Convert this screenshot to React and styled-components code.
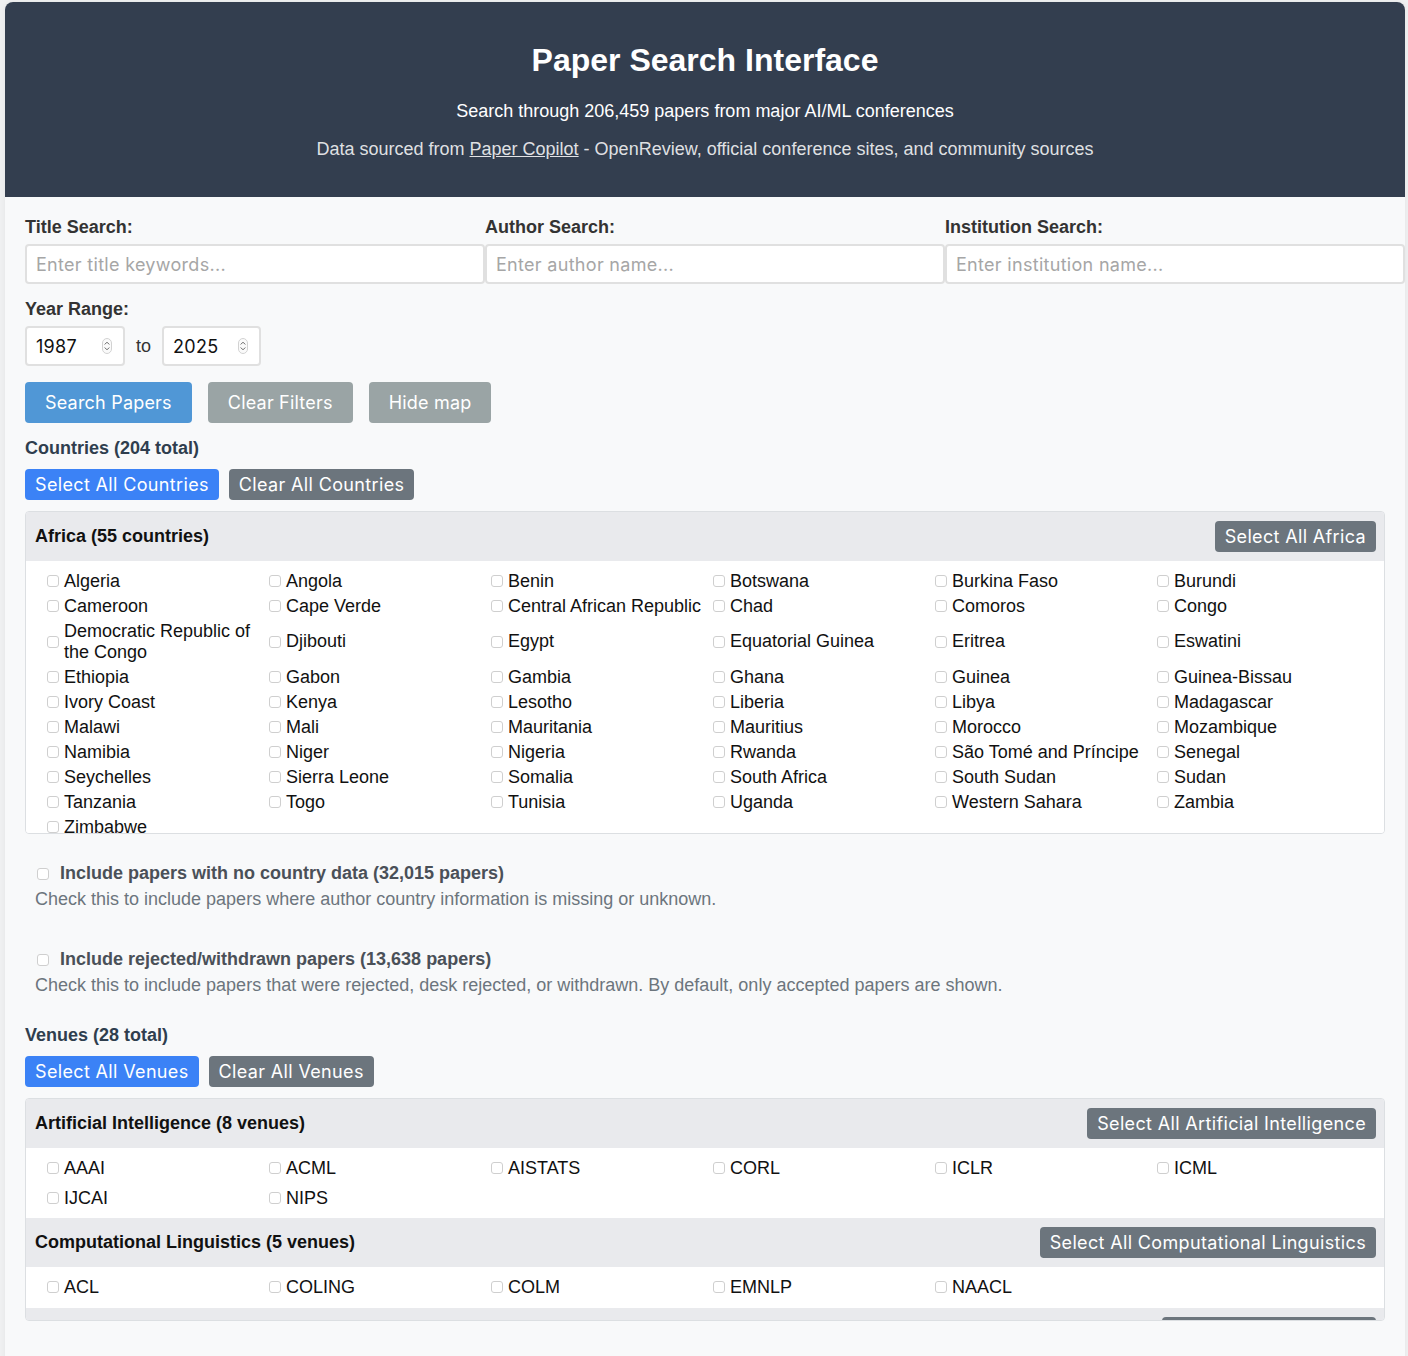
import React from "react";
import styled, { createGlobalStyle } from "styled-components";

const GlobalStyle = createGlobalStyle`
  html, body { margin: 0; padding: 0; background: #f0f1f2; }
  body { font-family: "Liberation Sans", Arial, sans-serif; color: #333; }
  * { box-sizing: border-box; }
`;

const Container = styled.div`
  width: 1400px;
  margin: 2px 0 0 5px;
  background: #f8f9fa;
  border-radius: 8px 8px 0 0;
  overflow: hidden;
  box-shadow: 0 0 6px rgba(0, 0, 0, 0.06);
`;

const Header = styled.header`
  background: #333e4f;
  color: #fff;
  text-align: center;
  padding: 40px 20px 37px;
`;

const Title = styled.h1`
  margin: 0 0 22px;
  font-size: 32px;
  font-weight: 700;
  line-height: 37px;
`;

const Subtitle = styled.p`
  margin: 0 0 17px;
  font-size: 18px;
  line-height: 21px;
  color: ${(p) => (p.$muted ? "rgba(255,255,255,0.86)" : "#fff")};
  &:last-child { margin-bottom: 0; }
`;

const Link = styled.a`
  color: inherit;
  text-decoration: underline;
`;

const Content = styled.main`
  padding: 20px 20px 40px;
`;

const SearchGrid = styled.div`
  display: grid;
  grid-template-columns: repeat(3, 440px);
  column-gap: 20px;
  margin-bottom: 15px;
`;

const Field = styled.div`
  display: flex;
  flex-direction: column;
  gap: 6px;
`;

const Label = styled.label`
  font-size: 18px;
  font-weight: 700;
  line-height: 21px;
  color: #333;
`;

const TextInput = styled.input`
  width: 460px;
  height: 40px;
  padding: 0 9px;
  border: 2px solid #e0e0e0;
  border-radius: 4px;
  background: #fff;
  font-family: Inter, "Noto Sans", sans-serif;
  font-size: 18px;
  letter-spacing: 0.3px;
  color: #333;
  outline: none;
  &::placeholder { color: #a6a6a6; }
`;

const YearRow = styled.div`
  display: flex;
  align-items: center;
  gap: 11px;
`;

const YearBox = styled.div`
  width: ${(p) => p.$w}px;
  height: 40px;
  display: flex;
  align-items: center;
  padding: 0 11px 0 9px;
  border: 2px solid #e0e0e0;
  border-radius: 4px;
  background: #fff;
`;

const YearInput = styled.input`
  flex: 1;
  min-width: 0;
  border: none;
  outline: none;
  background: transparent;
  padding: 0;
  font-family: Inter, "Noto Sans", sans-serif;
  font-size: 18px;
  letter-spacing: 0.3px;
  color: #111;
`;

const ToText = styled.span`
  font-size: 18px;
  color: #333;
`;

const ActionRow = styled.div`
  display: flex;
  gap: ${(p) => p.$gap || 16}px;
  margin: ${(p) => p.$margin || "16px 0 15px"};
`;

const Button = styled.button`
  height: ${(p) => p.$h || 41}px;
  padding: 0 ${(p) => p.$px || 20}px;
  border: none;
  border-radius: 4px;
  background: ${(p) => p.$bg};
  color: #fff;
  font-family: Inter, "Noto Sans", sans-serif;
  font-size: 18px;
  letter-spacing: ${(p) => (p.$h ? 0.35 : 0.2)}px;
  cursor: pointer;
  white-space: nowrap;
`;

const SectionTitle = styled.h3`
  margin: 0 0 10px;
  font-size: 18px;
  line-height: 21px;
  font-weight: 700;
  color: #2f3e4e;
`;

const GroupBox = styled.div`
  border: 1px solid #dcdfe2;
  border-radius: 4px;
  background: #fff;
  max-height: ${(p) => p.$max}px;
  overflow-y: auto;
  scrollbar-width: none;
  &::-webkit-scrollbar { display: none; }
`;

const GroupHeader = styled.div`
  display: flex;
  align-items: center;
  justify-content: space-between;
  padding: 9px 8px 9px 9px;
  min-height: 49px;
  background: #e9eaed;
`;

const GroupTitle = styled.span`
  font-size: 18px;
  font-weight: 700;
  color: #111;
`;

const ItemGrid = styled.div`
  display: grid;
  grid-template-columns: repeat(6, 222px);
  row-gap: ${(p) => p.$gap}px;
  padding: 10px 20px 10px 21px;
`;

const Item = styled.label`
  display: flex;
  align-items: center;
  font-size: 18px;
  line-height: 20.5px;
  color: #111;
`;

const Check = styled.input.attrs({ type: "checkbox" })`
  appearance: none;
  -webkit-appearance: none;
  flex: none;
  width: 12px;
  height: 12px;
  margin: 0 5px 0 0;
  border: 1px solid #cfcfcf;
  border-radius: 3px;
  background: #fff;
`;

const OptionBlock = styled.div`
  padding: 10px;
  margin: 19px 0;
`;

const OptionLabel = styled.label`
  display: flex;
  align-items: center;
  font-size: 18px;
  line-height: 21px;
  font-weight: 700;
  color: #4a5058;
`;

const OptionCheck = styled(Check)`
  margin: 0 11px 0 2px;
`;

const OptionDesc = styled.div`
  margin-top: 5px;
  font-size: 18px;
  line-height: 21px;
  color: #6c757d;
`;

const Spinner = () => (
  <svg width="10" height="16" viewBox="0 0 10 16" fill="none">
    <rect x="0.5" y="0.5" width="9" height="15" rx="4.5" stroke="#d2d2d2" fill="#fafafa" />
    <path d="M3 6.2 L5 4.2 L7 6.2" stroke="#666" strokeWidth="1" strokeLinecap="round" strokeLinejoin="round" />
    <path d="M3 9.8 L5 11.8 L7 9.8" stroke="#666" strokeWidth="1" strokeLinecap="round" strokeLinejoin="round" />
  </svg>
);

const africa = [
  "Algeria", "Angola", "Benin", "Botswana", "Burkina Faso", "Burundi",
  "Cameroon", "Cape Verde", "Central African Republic", "Chad", "Comoros", "Congo",
  "Democratic Republic of the Congo", "Djibouti", "Egypt", "Equatorial Guinea", "Eritrea", "Eswatini",
  "Ethiopia", "Gabon", "Gambia", "Ghana", "Guinea", "Guinea-Bissau",
  "Ivory Coast", "Kenya", "Lesotho", "Liberia", "Libya", "Madagascar",
  "Malawi", "Mali", "Mauritania", "Mauritius", "Morocco", "Mozambique",
  "Namibia", "Niger", "Nigeria", "Rwanda", "São Tomé and Príncipe", "Senegal",
  "Seychelles", "Sierra Leone", "Somalia", "South Africa", "South Sudan", "Sudan",
  "Tanzania", "Togo", "Tunisia", "Uganda", "Western Sahara", "Zambia",
  "Zimbabwe",
];

const asia = ["Afghanistan", "Bangladesh", "Bhutan", "Cambodia", "China", "India", "Indonesia", "Japan"];

const venueGroups = [
  { name: "Artificial Intelligence", items: ["AAAI", "ACML", "AISTATS", "CORL", "ICLR", "ICML", "IJCAI", "NIPS"] },
  { name: "Computational Linguistics", items: ["ACL", "COLING", "COLM", "EMNLP", "NAACL"] },
  { name: "Data Mining", items: ["KDD", "WWW", "ICDM"] },
  { name: "Computer Vision", items: ["CVPR", "ECCV", "ICCV", "WACV"] },
];

const Group = ({ title, button, items, gap }) => (
  <>
    <GroupHeader>
      <GroupTitle>{title}</GroupTitle>
      <Button $bg="#6c757d" $h={31} $px={10}>{button}</Button>
    </GroupHeader>
    <ItemGrid $gap={gap}>
      {items.map((c) => (
        <Item key={c}>
          <Check />
          <span>{c}</span>
        </Item>
      ))}
    </ItemGrid>
  </>
);

export default function App() {
  return (
    <>
      <GlobalStyle />
      <Container>
        <Header>
          <Title>Paper Search Interface</Title>
          <Subtitle>Search through 206,459 papers from major AI/ML conferences</Subtitle>
          <Subtitle $muted>
            Data sourced from <Link href="#">Paper Copilot</Link> - OpenReview, official conference sites, and community sources
          </Subtitle>
        </Header>
        <Content>
          <SearchGrid>
            <Field>
              <Label>Title Search:</Label>
              <TextInput placeholder="Enter title keywords..." />
            </Field>
            <Field>
              <Label>Author Search:</Label>
              <TextInput placeholder="Enter author name..." />
            </Field>
            <Field>
              <Label>Institution Search:</Label>
              <TextInput placeholder="Enter institution name..." />
            </Field>
          </SearchGrid>
          <Field>
            <Label>Year Range:</Label>
            <YearRow>
              <YearBox $w={100}>
                <YearInput defaultValue="1987" />
                <Spinner />
              </YearBox>
              <ToText>to</ToText>
              <YearBox $w={99}>
                <YearInput defaultValue="2025" />
                <Spinner />
              </YearBox>
            </YearRow>
          </Field>
          <ActionRow>
            <Button $bg="#5097d6">Search Papers</Button>
            <Button $bg="#9aa4a5">Clear Filters</Button>
            <Button $bg="#9aa4a5">Hide map</Button>
          </ActionRow>

          <SectionTitle>Countries (204 total)</SectionTitle>
          <ActionRow $gap={10} $margin="0 0 11px">
            <Button $bg="#3b82f6" $h={31} $px={10}>Select All Countries</Button>
            <Button $bg="#6c757d" $h={31} $px={10}>Clear All Countries</Button>
          </ActionRow>
          <GroupBox $max={323}>
            <Group title="Africa (55 countries)" button="Select All Africa" items={africa} gap={4.5} />
            <Group title="Asia (48 countries)" button="Select All Asia" items={asia} gap={4.5} />
          </GroupBox>

          <OptionBlock>
            <OptionLabel>
              <OptionCheck />
              Include papers with no country data (32,015 papers)
            </OptionLabel>
            <OptionDesc>Check this to include papers where author country information is missing or unknown.</OptionDesc>
          </OptionBlock>
          <OptionBlock>
            <OptionLabel>
              <OptionCheck />
              Include rejected/withdrawn papers (13,638 papers)
            </OptionLabel>
            <OptionDesc>
              Check this to include papers that were rejected, desk rejected, or withdrawn. By default, only accepted papers are shown.
            </OptionDesc>
          </OptionBlock>

          <SectionTitle>Venues (28 total)</SectionTitle>
          <ActionRow $gap={10} $margin="0 0 11px">
            <Button $bg="#3b82f6" $h={31} $px={10}>Select All Venues</Button>
            <Button $bg="#6c757d" $h={31} $px={10}>Clear All Venues</Button>
          </ActionRow>
          <GroupBox $max={223}>
            {venueGroups.map((g) => (
              <Group
                key={g.name}
                title={`${g.name} (${g.items.length} venues)`}
                button={`Select All ${g.name}`}
                items={g.items}
                gap={9}
              />
            ))}
          </GroupBox>
        </Content>
      </Container>
    </>
  );
}
